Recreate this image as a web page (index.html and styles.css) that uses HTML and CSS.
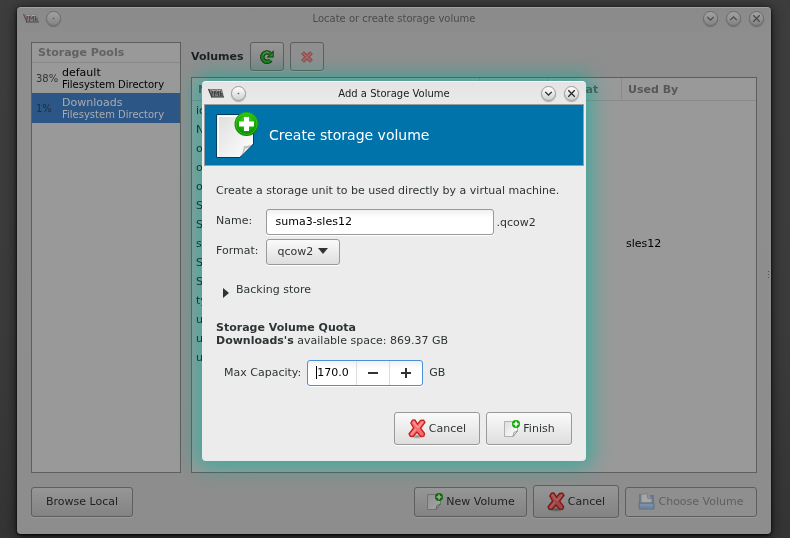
FILE: index.html
```html
<!DOCTYPE html>
<html lang="en">
<head>
<meta charset="utf-8">
<title>Add a Storage Volume</title>
<link rel="stylesheet" href="styles.css">
</head>
<body>
<svg class="defs" aria-hidden="true">
  <defs>
    <linearGradient id="paper" x1="0" y1="0" x2="1" y2="1"><stop offset="0" stop-color="#dedede"/><stop offset="1" stop-color="#ffffff"/></linearGradient>
    <radialGradient id="green" cx="0.5" cy="0.35" r="0.65"><stop offset="0" stop-color="#4bdc1e"/><stop offset="0.6" stop-color="#18a80a"/><stop offset="1" stop-color="#078000"/></radialGradient>
    <radialGradient id="shade"><stop offset="0" stop-color="#000" stop-opacity="0.4"/><stop offset="1" stop-color="#000" stop-opacity="0"/></radialGradient>
    <symbol id="cross" viewBox="0 0 18 20">
      <ellipse cx="9" cy="17.500" rx="8" ry="2.500" fill="url(#shade)"/>
      <path d="M4.500 1.200 7 1 9.500 5.200 12.500 1.400 15.500 1.200 17 3.400 12.600 9.200 16.600 14.600 15.800 17.200 12.600 17.400 9 13 5.200 17.400 2.400 17.400 1 15 5.600 9 2.800 4Z" fill="#f66b6b" stroke="#c41e1e" stroke-width="1.300" stroke-linejoin="round"/>
      <path d="M5.400 3 9.300 8M14.600 3 10.200 8.400M7.600 10.400 3.400 15.400" fill="none" stroke="#ff9a9a" stroke-width="1.300" stroke-linecap="round"/>
    </symbol>
    <symbol id="newdoc" viewBox="0 0 17 17">
      <path d="M1.500 1.500H14.500V11L10 16.500H1.500Z" fill="url(#paper)" stroke="#b0b0b0"/>
      <path d="M14.500 11 10 16.500 10.800 12.500Z" fill="#f4f4f4" stroke="#8a8a8a" stroke-width=".8"/>
      <circle cx="13" cy="4" r="4" fill="#14a808"/>
      <path d="M13 1.500V6.500M10.500 4H15.500" stroke="#fff" stroke-width="1.600"/>
    </symbol>
    <symbol id="vmm" viewBox="0 0 16 10">
      <path d="M0 1H14L16 9H3Z" fill="#858585"/>
      <path d="M.5 1 3.500 8 5 2M6.500 8V3L8.500 6 10.500 3V8M12.500 3V8M14 5V8" fill="none" stroke="#444" stroke-width="1.200"/>
      <path d="M4 2.500H7M9 2.500H12" stroke="#c8c0c0" stroke-width=".8"/>
      <path d="M3 3.500H4.500M8 5.500H9" stroke="#a43c4c"/>
      <path d="M3 9H16" stroke="#333"/>
    </symbol>
  </defs>
</svg>

<main class="window">
  <header class="titlebar">
    <svg class="app-icon" aria-hidden="true"><use href="#vmm"/></svg>
    <button class="orb" aria-label="Pin"><svg viewBox="0 0 16 16"><circle cx="8" cy="8" r="1"/></svg></button>
    <h1 class="caption">Locate or create storage volume</h1>
    <div class="controls">
      <button class="orb" aria-label="Minimize"><svg viewBox="0 0 16 16"><path d="M4 6 8 10 12 6"/></svg></button>
      <button class="orb" aria-label="Maximize"><svg viewBox="0 0 16 16"><path d="M4 10 8 6 12 10"/></svg></button>
      <button class="orb" aria-label="Close"><svg viewBox="0 0 16 16"><path d="M4 4 12 12M12 4 4 12"/></svg></button>
    </div>
  </header>

  <div class="panes">
    <section class="pools">
      <h2 class="list-title">Storage Pools</h2>
      <ul class="pool-list">
        <li class="pool"><span class="usage">38%</span><span class="pool-text"><span class="pool-name">default</span><span class="pool-type">Filesystem Directory</span></span></li>
        <li class="pool selected"><span class="usage">1%</span><span class="pool-text"><span class="pool-name">Downloads</span><span class="pool-type">Filesystem Directory</span></span></li>
      </ul>
    </section>
    <section class="volumes">
      <div class="toolbar">
        <h2 class="toolbar-title">Volumes</h2>
        <button class="btn tool" aria-label="Refresh">
          <svg class="tool-icon" viewBox="0 0 18 18"><path d="M13.200 12.400A5.300 5.300 0 1 1 12.600 5.200" fill="none" stroke="#0b3a10" stroke-width="5"/><path d="M16.500 1.500V9.500H8.500Z" fill="#0b3a10"/><path d="M13 12.600A5.300 5.300 0 1 1 13 5.600" fill="none" stroke="#1f7a20" stroke-width="3"/><path d="M15.500 3.800V8.500H10.800Z" fill="#2a8a2a"/><path d="M4.200 7A5.300 5.300 0 0 1 11 4" fill="none" stroke="#55a04c"/></svg>
        </button>
        <button class="btn tool" aria-label="Delete" disabled>
          <svg class="tool-icon" viewBox="0 0 18 18"><path d="M4 4 14 14M14 4 4 14" stroke="#8a4444" stroke-width="4.500"/><path d="M4.500 4.500 13.500 13.500M13.500 4.500 4.500 13.500" stroke="#a86464" stroke-width="2.500"/></svg>
        </button>
      </div>
      <div class="table-box">
        <table class="table">
          <colgroup><col><col class="col-size"><col class="col-format"><col class="col-used"></colgroup>
          <thead><tr><th>Name</th><th>Size</th><th>Format</th><th>Used By</th></tr></thead>
          <tbody>
            <tr><td>ic</td><td></td><td></td><td></td></tr>
            <tr><td>N</td><td></td><td></td><td></td></tr>
            <tr><td>o</td><td></td><td></td><td></td></tr>
            <tr><td>o</td><td></td><td></td><td></td></tr>
            <tr><td>o</td><td></td><td></td><td></td></tr>
            <tr><td>S</td><td></td><td></td><td></td></tr>
            <tr><td>S</td><td></td><td></td><td></td></tr>
            <tr><td>s</td><td></td><td></td><td class="used">sles12</td></tr>
            <tr><td>S</td><td></td><td></td><td></td></tr>
            <tr><td>S</td><td></td><td></td><td></td></tr>
            <tr><td>ty</td><td></td><td></td><td></td></tr>
            <tr><td>u</td><td></td><td></td><td></td></tr>
            <tr><td>u</td><td></td><td></td><td></td></tr>
            <tr><td>u</td><td></td><td></td><td></td></tr>
          </tbody>
        </table>
      </div>
    </section>
  </div>

  <footer class="actions">
    <button class="btn browse">Browse Local</button>
    <button class="btn new"><svg class="doc-icon dim" aria-hidden="true"><use href="#newdoc"/></svg>New Volume</button>
    <button class="btn tall"><svg class="cross-icon dim" aria-hidden="true"><use href="#cross"/></svg>Cancel</button>
    <button class="btn choose" disabled>
      <svg class="doc-icon" viewBox="0 0 17 17" aria-hidden="true"><path d="M1 1H4V15H1ZM12 2H16V15H12Z" fill="#65788e"/><path d="M3 10V1.500L9 .5 14 6V10Z" fill="#a4a6a8" stroke="#7c8084"/><path d="M9 .5 9.500 5 14 6" fill="#929597" stroke="#7c8084"/><path d="M1 10H16V16H1Z" fill="#7187a0" stroke="#5d7087"/><path d="M2 12H15" stroke="#8799ae"/></svg>Choose Volume</button>
  </footer>

  <svg class="grip" viewBox="0 0 2 8" aria-hidden="true"><path d="M0 0H1V1H0ZM0 3H1V4H0ZM0 6H1V7H0Z"/></svg>

  <div class="overlay">
    <form class="dialog" role="dialog" aria-labelledby="dialog-title">
      <header class="titlebar">
        <svg class="app-icon" aria-hidden="true"><use href="#vmm"/></svg>
        <button type="button" class="orb" aria-label="Pin"><svg viewBox="0 0 16 16"><circle cx="8" cy="8" r="1"/></svg></button>
        <h2 class="caption" id="dialog-title">Add a Storage Volume</h2>
        <div class="controls">
          <button type="button" class="orb" aria-label="Minimize"><svg viewBox="0 0 16 16"><path d="M4 6 8 10 12 6"/></svg></button>
          <button type="button" class="orb" aria-label="Close"><svg viewBox="0 0 16 16"><path d="M4 4 12 12M12 4 4 12"/></svg></button>
        </div>
      </header>
      <div class="banner">
        <svg class="banner-icon" viewBox="0 0 44 48" aria-hidden="true">
          <path d="M.5 3.500H37.500V33L24 46.500H.5Z" fill="url(#paper)" stroke="#063c5c"/>
          <path d="M1.500 4.500H36.500V6H3V45.500H1.500Z" fill="#fff"/>
          <path d="M24.500 46C27 42 27 38 28 35 31 35 35 34.500 37.500 33Z" fill="#c4c4c4"/>
          <path d="M25.500 45C28.500 41 28.500 39.500 29.500 37.500 32 37.500 34.500 36.500 36.500 34Z" fill="#f4f4f4"/>
          <path d="M24 46.500 37.500 33" stroke="#063c5c"/>
          <circle cx="30.500" cy="13" r="12" fill="url(#green)"/>
          <circle cx="30.500" cy="13" r="10.500" fill="none" stroke="#52cf35" stroke-opacity=".6"/>
          <path d="M28 6H33V10.500H38V15.500H33V20H28V15.500H23V10.500H28Z" fill="#fff"/>
        </svg>
        <h3 class="banner-title">Create storage volume</h3>
      </div>
      <div class="body">
        <p class="intro">Create a storage unit to be used directly by a virtual machine.</p>
        <div class="fields">
          <label for="name">Name:</label>
          <div class="field"><input class="entry" id="name" type="text" value="suma3-sles12"><span>.qcow2</span></div>
          <label for="format">Format:</label>
          <div class="select-box">
            <select class="btn select" id="format"><option>qcow2</option></select>
            <svg class="select-arrow" viewBox="0 0 10 6" aria-hidden="true"><path d="M0 0H10L5 6Z"/></svg>
          </div>
        </div>
        <details class="backing">
          <summary><svg class="expander" viewBox="0 0 6 10" aria-hidden="true"><path d="M0 0 6 5 0 10Z"/></svg>Backing store</summary>
        </details>
        <div class="quota">
          <h4 class="quota-title">Storage Volume Quota</h4>
          <p class="quota-text"><b>Downloads's</b> available space: 869.37 GB</p>
        </div>
        <div class="capacity">
          <label for="capacity">Max Capacity:</label>
          <div class="spin">
            <span class="spin-value"><i class="caret"></i><input id="capacity" type="text" value="170.0"></span>
            <button type="button" aria-label="Decrease"><svg viewBox="0 0 12 12"><path d="M1 6H11"/></svg></button>
            <button type="button" aria-label="Increase"><svg viewBox="0 0 12 12"><path d="M1 6H11M6 1V11"/></svg></button>
          </div>
          <span>GB</span>
        </div>
        <div class="dialog-actions">
          <button type="button" class="btn tall"><svg class="cross-icon" aria-hidden="true"><use href="#cross"/></svg>Cancel</button>
          <button type="submit" class="btn tall"><svg class="doc-icon" aria-hidden="true"><use href="#newdoc"/></svg>Finish</button>
        </div>
      </div>
    </form>
  </div>
</main>
</body>
</html>
```

FILE: styles.css
```css
* { box-sizing: border-box; }

body {
  margin: 0;
  height: 100vh;
  display: flex;
  padding: 7px 19px 4px 17px;
  background: linear-gradient(#3d3d3d, #3b3b3b 60%, #343434);
  font: 11px/13px "DejaVu Sans", sans-serif;
  color: #2e3436;
}

h1, h2, h3, h4, p, ul { margin: 0; padding: 0; font-size: inherit; font-weight: normal; }
button, input, select { font: inherit; color: inherit; }
button { padding: 0; }
.defs { position: absolute; width: 0; height: 0; }

.window {
  position: relative;
  flex: 1;
  display: flex;
  flex-direction: column;
  min-width: 0;
  border-top: 1px solid #a2a2a2;
  border-radius: 4px;
  background: linear-gradient(#8a8a8a, #8e8e8e 30px, #8d8d8d);
  box-shadow: 0 1px 3px #000, 0 2px 12px #151515;
  color: #1c2022;
}

.grip {
  position: absolute;
  right: 1px;
  top: 50%;
  width: 2px;
  height: 8px;
  fill: #505050;
}

/* Title bars */
.titlebar {
  position: relative;
  display: flex;
  align-items: center;
  gap: 7px;
  height: 20px;
  padding: 0 7px 0 6px;
  flex: none;
}
.app-icon { width: 16px; height: 10px; }
.window > .titlebar .app-icon { opacity: .8; }
.caption {
  position: absolute;
  inset: 0;
  display: flex;
  align-items: center;
  justify-content: center;
  font-size: 10px;
  color: #4c4c4c;
  pointer-events: none;
}
.controls { display: flex; gap: 8px; margin-left: auto; }
.orb {
  width: 15px;
  height: 15px;
  border: 1px solid #6c6c6c;
  border-radius: 50%;
  background: linear-gradient(#a3a3a3, #838383);
  box-shadow: 0 1px 1px #6a6a6a;
}
.orb svg { display: block; width: 13px; height: 13px; fill: none; stroke: #4a4a4a; stroke-width: 1.5; }
.orb circle { fill: #555; stroke: none; }

/* Storage browser */
.panes { flex: 1; display: flex; gap: 10px; padding: 14px 14px 0; min-height: 0; }
.pools { width: 150px; border: 1px solid #5e5e5e; background: #999; }
.list-title {
  height: 20px;
  padding: 3px 6px;
  border-bottom: 1px solid #8a8a8a;
  font-weight: bold;
  color: #606263;
}
.pool-list { list-style: none; }
.pool { display: flex; align-items: center; height: 30px; padding-left: 4px; color: #000; }
.usage { width: 26px; font-size: 10px; color: #303435; }
.pool-text { display: flex; flex-direction: column; }
.pool-type { font-size: 10px; line-height: 12px; }
.selected { background: #2c5685; color: #a8adb3; }
.selected .usage { color: #1d2e40; }

.volumes { flex: 1; display: flex; flex-direction: column; gap: 6px; min-width: 0; }
.toolbar { display: flex; align-items: center; gap: 6px; }
.toolbar-title { font-weight: bold; }
.btn {
  display: flex;
  align-items: center;
  justify-content: center;
  gap: 3px;
  height: 30px;
  border: 1px solid #5e5e5e;
  border-radius: 3px;
  background: linear-gradient(#969696, #838383);
  box-shadow: 0 1px 0 #9a9a9a;
}
.btn:disabled { background: #8f8f8f; color: #5e6061; }
.tool { width: 34px; height: 29px; }
.tool-icon { width: 16px; height: 16px; }
.table-box { flex: 1; border: 1px solid #5e5e5e; background: #999; overflow: hidden; }
.table { width: 100%; table-layout: fixed; border-collapse: separate; border-spacing: 0; }
.col-size { width: 68px; }
.col-format { width: 74px; }
.col-used { width: 134px; }
.table th {
  height: 23px;
  padding: 0 6px;
  border-right: 1px solid #8a8a8a;
  border-bottom: 1px solid #8a8a8a;
  text-align: left;
  color: #55585a;
}
.table th:last-child { border-right: 0; }
.table td { height: 19px; padding: 0 4px; color: #1c2022; }
.table .used { color: #000; }

.actions { display: flex; align-items: center; gap: 6px; padding: 12px 14px 16px; }
.browse { width: 102px; margin-right: auto; }
.new { width: 113px; }
.tall { width: 86px; height: 33px; }
.choose { width: 132px; }
.doc-icon { width: 17px; height: 17px; }
.cross-icon { width: 18px; height: 20px; }
.dim { filter: brightness(.65); }

/* Modal dialog */
.overlay {
  position: absolute;
  inset: 0;
  display: flex;
  align-items: center;
  justify-content: center;
}
.dialog {
  position: relative;
  width: 384px;
  padding: 0 2px 4px;
  border-top: 1px solid #fff;
  border-radius: 4px;
  background: linear-gradient(#e4e4e4, #ececec 30px);
  color: #2e3436;
}
/* The glow tints what lies under it, so list text stays dark inside it. */
.dialog::before {
  content: "";
  position: absolute;
  inset: -1px 0 0;
  border-radius: 4px;
  box-shadow: 0 0 20px 6px rgb(52, 148, 132);
  mix-blend-mode: hard-light;
  pointer-events: none;
}
.dialog .titlebar { height: 22px; padding: 0 5px 0 4px; }
.dialog .caption { color: #1c1c1c; }
.dialog .orb {
  border-color: #9a9a9a;
  background: linear-gradient(#fff, #d0d0d0);
  box-shadow: 0 1px 1px #aaa;
}
.dialog .orb svg { stroke: #222; }
.banner {
  display: flex;
  align-items: center;
  gap: 9px;
  height: 62px;
  padding-left: 11px;
  border: 1px solid #9c9c9c;
  background: #0073aa;
}
.banner-icon { width: 44px; height: 48px; }
.banner-title { font-size: 14px; line-height: 18px; color: #fff; }
.body { display: flex; flex-direction: column; padding: 18px 12px 12px; }
.fields { display: grid; grid-template-columns: auto 1fr; align-items: center; gap: 4px 8px; margin-top: 12px; }
.fields label { line-height: 12px; padding-bottom: 2px; }
.field { display: flex; align-items: center; gap: 2px; }
.entry {
  width: 228px;
  height: 26px;
  padding: 0 8px 2px;
  border: 1px solid #999;
  border-radius: 3px;
  background: linear-gradient(#f1f1f1, #fff 8px);
  box-shadow: 0 1px 0 #fff;
  color: #000;
}
.dialog .btn { border-color: #999; background: linear-gradient(#fafafa, #dedede); box-shadow: 0 1px 0 #fff; }
.select-box { position: relative; width: 74px; }
.dialog .select { appearance: none; width: 100%; height: 26px; padding: 0 10px 2px; }
.select-arrow { position: absolute; right: 12px; top: 9px; width: 10px; height: 6px; fill: #2e3436; pointer-events: none; }
.backing { margin: 18px 0 0 7px; }
.backing summary { display: flex; gap: 7px; list-style: none; height: 15px; align-items: flex-start; }
.expander { width: 6px; height: 10px; align-self: flex-end; fill: #2e3436; }
.quota { margin-top: 23px; }
.quota-title { font-weight: bold; }
.capacity { display: flex; align-items: center; gap: 6px; margin: 13px 0 0 8px; }
.capacity label, .capacity > span { padding-bottom: 2px; }
.spin {
  display: flex;
  width: 116px;
  height: 26px;
  border: 1px solid #4a90d9;
  border-radius: 3px;
  background: linear-gradient(#f1f1f1, #fff 8px);
  box-shadow: 0 1px 0 #fff;
}
.spin-value { flex: 1; display: flex; align-items: center; padding: 0 0 2px 8px; min-width: 0; }
.caret { width: 1px; height: 13px; flex: none; background: #000; }
.spin input { width: 100%; padding: 0; border: 0; background: none; color: #000; outline: 0; }
.spin button { width: 33px; border: 0; border-left: 1px solid #ddd; background: none; display: flex; align-items: center; justify-content: center; }
.spin svg { width: 12px; height: 12px; stroke: #2e3436; stroke-width: 2; }
.dialog-actions { display: flex; justify-content: flex-end; gap: 6px; margin-top: 26px; }
```
